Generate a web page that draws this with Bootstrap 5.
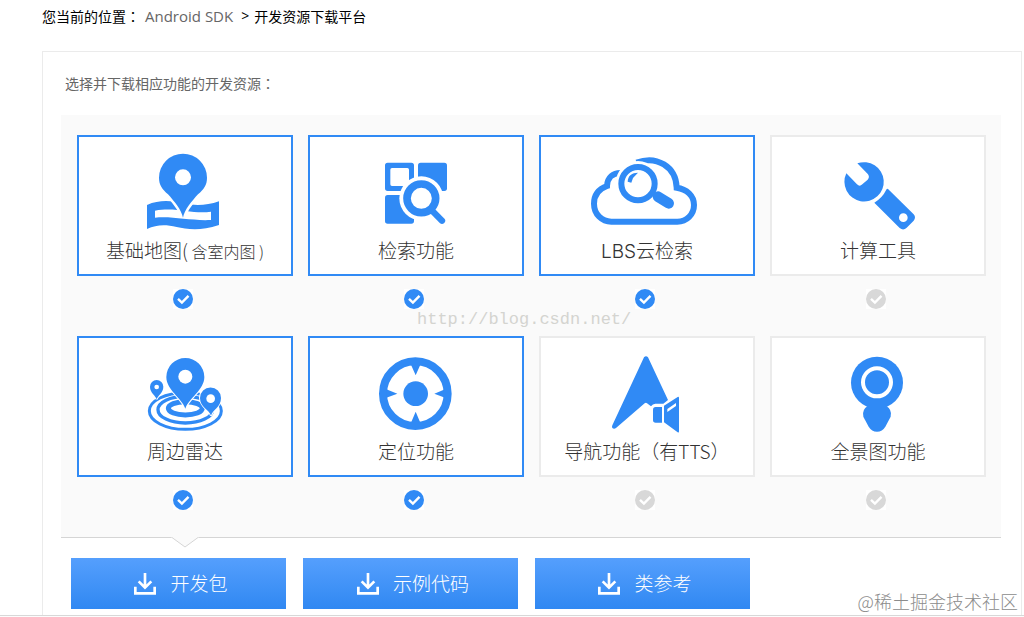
<!DOCTYPE html>
<html lang="zh-CN">
<head>
<meta charset="utf-8">
<meta name="viewport" content="width=device-width, initial-scale=1">
<title>开发资源下载平台</title>
<link href="https://cdn.jsdelivr.net/npm/bootstrap@5.3.0/dist/css/bootstrap.min.css" rel="stylesheet">
<style>
:root { --blue: #308af5; --line: #ebebeb; }
body { font-family: "Noto Sans CJK SC", sans-serif; font-size: 14px; line-height: 20px; color: #000; background: #fff; overflow: hidden; }
.colon { font-family: "Noto Sans CJK TC", sans-serif; }
.crumbs { padding: 6px 0 0 42px; line-height: 20px; }
.crumbs a { font-family: "Open Sans", sans-serif; font-size: 15px; color: #666; margin: 0 8px 0 5px; }
.crumbs .sep { font-family: "Open Sans", sans-serif; margin-right: 5px; }
.download-box { margin: 25px 2px 0 42px; padding: 21px 20px 6px 18px; border: 1px solid var(--line); border-bottom: 0; }
.intro { color: #666; padding-left: 4px; margin-bottom: 22px; }
.panel { background: #fafafa; border-bottom: 1px solid #d5d5d5; padding: 20px 15px 27px 16px; }
.features { display: grid; grid-template-columns: repeat(4, 1fr); gap: 27px 15px; }
.feature { cursor: pointer; }
.tile { display: block; height: 141px; background: #fff; border: 2px solid var(--line); color: #333; }
.feature:has(:checked) .tile { border-color: var(--blue); }
.tile svg { display: block; width: 100%; height: 100px; fill: var(--blue); }
.tile-name { display: block; font-size: 19px; font-weight: 300; line-height: 26px; text-align: center; white-space: nowrap; }
.tile-name small { font-size: 16px; }
.latin { font-family: Inter, sans-serif; }
.tick { appearance: none; display: block; width: 20px; height: 20px; margin: 13px auto 0; border: 0;
  background: #fff url("data:image/svg+xml,%3Csvg xmlns='http://www.w3.org/2000/svg' viewBox='0 0 20 20'%3E%3Ccircle cx='10' cy='10' r='10' fill='%23d8d8d8'/%3E%3Cpath d='M5 9.800l3.900 3.700 6.600-6.700' fill='none' stroke='%23fff' stroke-width='2.400'/%3E%3C/svg%3E"); }
.tick:checked { background-image: url("data:image/svg+xml,%3Csvg xmlns='http://www.w3.org/2000/svg' viewBox='0 0 20 20'%3E%3Ccircle cx='10' cy='10' r='10' fill='%23308af5'/%3E%3Cpath d='M5 9.800l3.900 3.700 6.600-6.700' fill='none' stroke='%23fff' stroke-width='2.400'/%3E%3C/svg%3E"); }
.tick-row { padding-right: 4px; }
.notch { position: absolute; left: 110px; top: 100%; width: 28px; height: 11px; }
.downloads { padding: 20px 0 0 10px; gap: 17px; }
.btn-get { width: 215px; height: 51px; gap: 14px; padding: 0 0 0 5px; border: 0; border-radius: 0; color: #fff; font-size: 19px; font-weight: 300; background: linear-gradient(#559ffd, #3088f2); }
.btn-get:hover { color: #fff; background: #3088f2; }
.page-end { border-top: 1px solid #d8d8d8; background: #fcfcfc; height: 2px; }
.mark-url { position: absolute; left: 356px; top: 194px; font-family: "Liberation Mono", monospace; font-size: 17px; line-height: 22px; color: #d4d4d0; pointer-events: none; }
.mark-site { position: absolute; right: 6px; bottom: 1px; font-size: 18px; font-weight: 300; line-height: 26px; color: #8c8c8c; pointer-events: none; }
</style>
</head>
<body>
<nav class="crumbs d-flex align-items-center" aria-label="位置">
  <span>您当前的位置<span class="colon" lang="zh-TW">：</span></span><a href="#" class="text-decoration-none">Android SDK</a><span class="sep">&gt;</span><span>开发资源下载平台</span>
</nav>
<div class="position-relative">
<main class="download-box">
  <p class="intro">选择并下载相应功能的开发资源<span class="colon" lang="zh-TW">：</span></p>
  <section class="panel position-relative">
    <div class="features">
      <label class="feature"><span class="tile">
        <svg viewBox="57 66 636 300" aria-hidden="true">
          <path fill-rule="evenodd" d="M261 270C300 252 340 258 369 265C405 273 440 272 477 259V330C420 349 380 342 350 336C315 328 290 329 261 342ZM285 287V308C340 303 390 318 453 315V290C400 299 350 275 285 287Z"/>
          <path d="M369 308C365 285 342 258 324 238C306 222 297 210 297 188A72 72 0 0 1 441 188C441 210 432 222 414 238C396 258 373 285 369 308Z" stroke="#fff" stroke-width="14" paint-order="stroke"/>
          <circle cx="369" cy="187" r="24" fill="#fff"/>
        </svg>
        <span class="tile-name">基础地图(<small> 含室内图 )</small></span></span>
        <span class="tick-row d-block"><input class="tick" type="checkbox" checked></span></label>

      <label class="feature"><span class="tile">
        <svg viewBox="30 36 636 300" aria-hidden="true">
          <path fill-rule="evenodd" d="M263 113H334Q342 113 342 121V190Q342 198 334 198H263Q255 198 255 190V121Q255 113 263 113ZM276 129Q271 129 271 134V178Q271 183 276 183H322Q327 183 327 178V134Q327 129 322 129Z"/>
          <rect x="354" y="113" width="87" height="85" rx="8"/><rect x="255" y="210" width="87" height="86" rx="8"/>
          <circle cx="364" cy="220" r="66" fill="#fff"/>
          <path d="M395 256L426 287" stroke="#308af5" stroke-width="19" stroke-linecap="round"/>
          <circle cx="364" cy="220" r="43" fill="#fff" stroke="#308af5" stroke-width="23"/>
        </svg>
        <span class="tile-name">检索功能</span></span>
        <span class="tick-row d-block"><input class="tick" type="checkbox" checked></span></label>

      <label class="feature"><span class="tile">
        <svg viewBox="33 36 636 300" aria-hidden="true">
          <path fill="none" stroke="#308af5" stroke-width="18" d="M320 113C380 90 438 125 440 188C470 192 492 212 492 240C492 268 470 290 442 290H244C216 290 192 268 192 236C192 210 206 192 231 183C232 157 250 144 271 144"/>
          <circle cx="324" cy="175" r="67" fill="#fff"/>
          <path d="M384 215L416 235" stroke="#308af5" stroke-width="32" stroke-linecap="round"/>
          <circle cx="324" cy="176" r="50" fill="#fff" stroke="#308af5" stroke-width="18"/>
          <path d="M293 170C294 151 306 143 324 143L309 159L304 173Z"/>
        </svg>
        <span class="tile-name"><span class="latin">LBS</span>云检索</span></span>
        <span class="tick-row d-block"><input class="tick" type="checkbox" checked></span></label>

      <label class="feature"><span class="tile">
        <svg viewBox="36 36 636 300" aria-hidden="true">
          <path d="M259 145L291 178Q299 186 307 178L323 164Q330 157 324 148L292 115A59 59 0 1 1 259 145Z"/>
          <path fill-rule="evenodd" d="M384 192L461 268Q469 277 461 287L440 308Q430 318 419 309L343 233Q367 219 378 196Q380 189 384 192ZM430 265a13 13 0 1 0 0 26a13 13 0 1 0 0-26Z"/>
        </svg>
        <span class="tile-name">计算工具</span></span>
        <span class="tick-row d-block"><input class="tick" type="checkbox"></span></label>

      <label class="feature"><span class="tile">
        <svg viewBox="57 39 636 300" aria-hidden="true">
          <g fill="none" stroke="#308af5">
            <ellipse cx="376" cy="258" rx="108" ry="55" stroke-width="9"/>
            <ellipse cx="376" cy="254" rx="82" ry="40" stroke-width="10"/>
            <ellipse cx="376" cy="250" rx="51" ry="20" stroke-width="15"/>
          </g>
          <g stroke="#fff" stroke-width="6" paint-order="stroke">
            <path d="M290 223C287 211 270 204 270 185A20 20 0 0 1 310 185C310 204 293 211 290 223Z"/>
            <path d="M376 251C366 220 319 195 319 156A57 57 0 0 1 433 156C433 195 386 220 376 251Z"/>
            <path d="M453 272C449 255 420 247 420 219A31.500 31.500 0 0 1 483 219C483 247 457 255 453 272Z"/>
          </g>
          <g fill="#fff"><circle cx="290" cy="186" r="7"/><circle cx="376" cy="155" r="21"/><circle cx="452" cy="221" r="13"/></g>
        </svg>
        <span class="tile-name">周边雷达</span></span>
        <span class="tick-row d-block"><input class="tick" type="checkbox" checked></span></label>

      <label class="feature"><span class="tile">
        <svg viewBox="30 39 636 300" aria-hidden="true">
          <circle cx="346" cy="206" r="97" fill="none" stroke="#308af5" stroke-width="24"/>
          <circle cx="347" cy="206" r="37"/>
          <path d="M333 119H361L347 151ZM333 293H361L347 260ZM259 193V218L292 206ZM435 193V218L403 206Z"/>
        </svg>
        <span class="tile-name">定位功能</span></span>
        <span class="tick-row d-block"><input class="tick" type="checkbox" checked></span></label>

      <label class="feature"><span class="tile">
        <svg viewBox="33 39 636 300" aria-hidden="true">
          <path d="M342 97Q348 90 354 97L414 225L400 236H376Q368 237 363 244L351 235Q348 232 344 235L258 309Q252 314 247 309Q245 306 247 301Z"/>
          <path d="M377 246H396V293H377Q369 293 369 285V254Q369 246 377 246Z"/>
          <path fill-rule="evenodd" d="M402 242L443 216Q447 214 447 219V319Q447 324 443 322L402 292ZM412 252V261L438 243V234Z"/>
        </svg>
        <span class="tile-name">导航功能（有TTS）</span></span>
        <span class="tick-row d-block"><input class="tick" type="checkbox"></span></label>

      <label class="feature"><span class="tile">
        <svg viewBox="36 39 636 300" aria-hidden="true">
          <circle cx="351" cy="173" r="78"/>
          <path d="M323 243H379Q397 254 392 275L376 305Q367 320 351 320Q335 320 326 305L310 275Q305 254 323 243Z"/>
          <circle cx="351" cy="172" r="42" fill="none" stroke="#fff" stroke-width="12"/>
        </svg>
        <span class="tile-name">全景图功能</span></span>
        <span class="tick-row d-block"><input class="tick" type="checkbox"></span></label>
    </div>
    <span class="mark-url">http://blog.csdn.net/</span>
    <svg class="notch" viewBox="0 0 28 11" aria-hidden="true"><path d="M0 0H28L14 10Z" fill="#fafafa"/><path d="M1 0.500L14 10L27 0.500" fill="none" stroke="#d5d5d5"/></svg>
  </section>
  <div class="downloads d-flex flex-wrap">
    <button type="button" class="btn btn-get d-flex align-items-center justify-content-center"><svg width="22" height="22" viewBox="0 0 66 66" fill="none" stroke="#fff" stroke-width="8" aria-hidden="true"><path d="M33 0V44M14 25L33 44L52 25M4 41V61H62V41"/></svg>开发包</button>
    <button type="button" class="btn btn-get d-flex align-items-center justify-content-center"><svg width="22" height="22" viewBox="0 0 66 66" fill="none" stroke="#fff" stroke-width="8" aria-hidden="true"><path d="M33 0V44M14 25L33 44L52 25M4 41V61H62V41"/></svg>示例代码</button>
    <button type="button" class="btn btn-get d-flex align-items-center justify-content-center"><svg width="22" height="22" viewBox="0 0 66 66" fill="none" stroke="#fff" stroke-width="8" aria-hidden="true"><path d="M33 0V44M14 25L33 44L52 25M4 41V61H62V41"/></svg>类参考</button>
  </div>
</main>
<span class="mark-site">@稀土掘金技术社区</span>
</div>
<div class="page-end"></div>
<script src="https://cdn.jsdelivr.net/npm/bootstrap@5.3.0/dist/js/bootstrap.bundle.min.js"></script>
</body>
</html>
